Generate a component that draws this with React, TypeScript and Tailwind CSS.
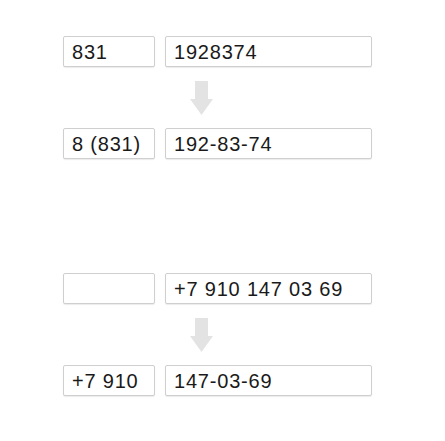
const rows: [string, string][][] = [
  [
    ["831", "1928374"],
    ["8 (831)", "192-83-74"],
  ],
  [
    ["", "+7 910 147 03 69"],
    ["+7 910", "147-03-69"],
  ],
];

function Field({ value, className }: { value: string; className: string }) {
  return (
    <div
      className={`h-[31px] border border-[#cfcfcf] rounded-[2px] shadow-[0_1px_1px_rgba(0,0,0,0.08)] bg-white px-[8px] pt-[1px] flex items-center text-[20px] tracking-[0.8px] text-[#1a1a1a] leading-none whitespace-nowrap ${className}`}
    >
      {value}
    </div>
  );
}

function Row({ pair }: { pair: [string, string] }) {
  return (
    <div className="flex gap-[10px]">
      <Field value={pair[0]} className="w-[92px]" />
      <Field value={pair[1]} className="w-[207px]" />
    </div>
  );
}

function Arrow() {
  return (
    <div className="h-[61px] flex items-center pl-[127px]">
      <svg width="23" height="34" viewBox="0 0 23 34">
        <path d="M5 0 H18 V18 H23 L11.5 34 L0 18 H5 Z" fill="#e3e3e3" />
      </svg>
    </div>
  );
}

export default function App() {
  return (
    <div
      className="w-[445px] h-[441px] bg-white pl-[63px] pt-[36px] flex flex-col gap-[114px]"
      style={{ fontFamily: '"Liberation Sans", Arial, sans-serif' }}
    >
      {rows.map((group, i) => (
        <div key={i} className="flex flex-col">
          <Row pair={group[0]} />
          <Arrow />
          <Row pair={group[1]} />
        </div>
      ))}
    </div>
  );
}
